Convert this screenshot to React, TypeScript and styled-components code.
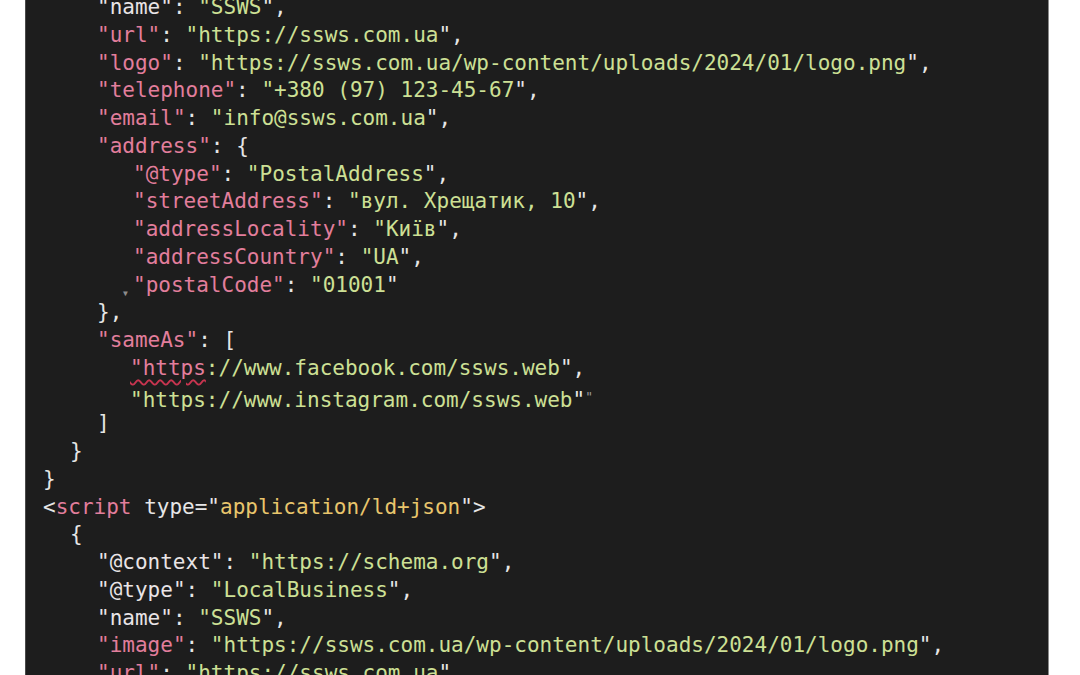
import React from "react";
import styled, { createGlobalStyle } from "styled-components";

const Global = createGlobalStyle`
  html, body { margin: 0; padding: 0; background: #ffffff; }
  body { width: 1080px; height: 675px; overflow: hidden; }
`;

const Page = styled.div`
  width: 1080px;
  height: 675px;
  background: #ffffff;
  display: flex;
  overflow: hidden;
`;

const Panel = styled.div`
  margin-left: 25px;
  width: 1024px;
  height: 675px;
  background: #1d1d1d;
  border-left: 1px solid #4a4a4a;
  border-right: 1px solid #8a8a8a;
  box-sizing: border-box;
  overflow: hidden;
`;

const Code = styled.div`
  margin-top: -6px;
  padding-left: 17px;
  font-family: "DejaVu Sans Mono", "Liberation Mono", monospace;
  font-size: 21px;
  line-height: 27.75px;
  color: #e6e6e6;
  white-space: pre;
`;

const Line = styled.div<{ $indent: number }>`
  position: relative;
  height: 27.75px;
  padding-left: ${(p) => p.$indent}px;
`;

const Key = styled.span<{ $plain?: boolean }>`
  color: ${(p) => (p.$plain ? "#e9e4e6" : "#e27e9c")};
`;

const Str = styled.span`
  color: #cde095;
`;

const Punct = styled.span`
  color: #e6e6e6;
`;

const Tag = styled.span`
  color: #e27e9c;
`;

const AttrVal = styled.span`
  color: #e8c56c;
`;

const Squiggle = styled.span`
  color: #e27e9c;
  text-decoration: underline wavy #c8344f;
  text-decoration-thickness: 1.5px;
  text-underline-offset: 4px;
`;

const Marker = styled.span`
  position: absolute;
  margin-left: -10px;
  margin-top: 8px;
  font-size: 8px;
  color: #8c8c8c;
`;

const Ghost = styled.span`
  color: #9a9a9a;
  font-size: 13px;
  vertical-align: 6px;
`;

const I0 = 0;
const I1 = 27;
const I2 = 54;
const I3 = 90;

type KV = { k: string; v?: string; tail?: string; plain?: boolean; indent: number };

const Pair: React.FC<KV> = ({ k, v, tail = ",", plain, indent }) => (
  <Line $indent={indent}>
    <Key $plain={plain}>"{k}"</Key>
    <Punct>: </Punct>
    {v !== undefined ? (
      <>
        <Str>"{v}</Str>
        <Punct>"{tail}</Punct>
      </>
    ) : (
      <Punct>{tail}</Punct>
    )}
  </Line>
);

export default function App() {
  return (
    <Page>
      <Global />
      <Panel>
        <Code>
          <Pair indent={I2} k="name" v="SSWS" plain />
          <Pair indent={I2} k="url" v="https://ssws.com.ua" />
          <Pair indent={I2} k="logo" v="https://ssws.com.ua/wp-content/uploads/2024/01/logo.png" />
          <Pair indent={I2} k="telephone" v="+380 (97) 123-45-67" />
          <Pair indent={I2} k="email" v="info@ssws.com.ua" />
          <Pair indent={I2} k="address" tail="{" />
          <Pair indent={I3} k="@type" v="PostalAddress" />
          <Pair indent={I3} k="streetAddress" v="вул. Хрещатик, 10" />
          <Pair indent={I3} k="addressLocality" v="Київ" />
          <Pair indent={I3} k="addressCountry" v="UA" />
          <Line $indent={I3}>
            <Marker>▼</Marker>
            <Key>"postalCode"</Key>
            <Punct>: </Punct>
            <Str>"01001</Str>
            <Punct>"</Punct>
          </Line>
          <Line $indent={I2}>
            <Punct>{"},"}</Punct>
          </Line>
          <Pair indent={I2} k="sameAs" tail="[" />
          <Line $indent={I3 - 3}>
            <Squiggle>"https</Squiggle>
            <Str>://www.facebook.com/ssws.web</Str>
            <Punct>",</Punct>
          </Line>
          <Line $indent={I3 - 3}>
            <Str>"https://www.instagram.com/ssws.web</Str>
            <Punct>"</Punct>
            <Ghost>"</Ghost>
          </Line>
          <Line $indent={I2}>
            <Punct>]</Punct>
          </Line>
          <Line $indent={I1}>
            <Punct>{"}"}</Punct>
          </Line>
          <Line $indent={I0}>
            <Punct>{"}"}</Punct>
          </Line>
          <Line $indent={I0}>
            <Punct>&lt;</Punct>
            <Tag>script</Tag>
            <Punct> type="</Punct>
            <AttrVal>application/ld+json</AttrVal>
            <Punct>"&gt;</Punct>
          </Line>
          <Line $indent={I1}>
            <Punct>{"{"}</Punct>
          </Line>
          <Pair indent={I2} k="@context" v="https://schema.org" plain />
          <Pair indent={I2} k="@type" v="LocalBusiness" plain />
          <Pair indent={I2} k="name" v="SSWS" plain />
          <Pair indent={I2} k="image" v="https://ssws.com.ua/wp-content/uploads/2024/01/logo.png" />
          <Pair indent={I2} k="url" v="https://ssws.com.ua" />
        </Code>
      </Panel>
    </Page>
  );
}
